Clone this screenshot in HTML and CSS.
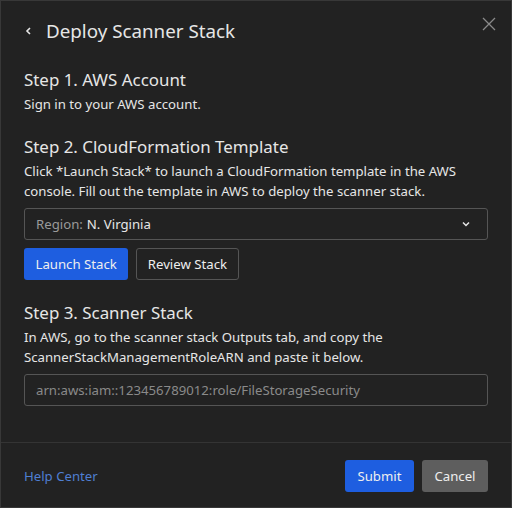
FILE: index.html
```html
<!DOCTYPE html>
<html>
<head>
<meta charset="utf-8">
<link rel="stylesheet" href="styles.css">
</head>
<body>
<div class="dialog">
  <div class="header">
    <svg class="back" width="10" height="10" viewBox="0 0 10 10"><path d="M6 2 L3 5 L6 8" fill="none" stroke="#e6e6e6" stroke-width="1.6"/></svg>
    <h1 class="title">Deploy Scanner Stack</h1>
    <svg class="close" width="14" height="14" viewBox="0 0 14 14"><path d="M1 1 L13 13 M13 1 L1 13" stroke="#8a8a8a" stroke-width="1.3"/></svg>
  </div>
  <div class="body">
    <section class="step">
      <h2>Step 1. AWS Account</h2>
      <p>Sign in to your AWS account.</p>
    </section>
    <section class="step">
      <h2>Step 2. CloudFormation Template</h2>
      <p>Click *Launch Stack* to launch a CloudFormation template in the AWS console. Fill out the template in AWS to deploy the scanner stack.</p>
      <div class="select"><span class="lbl">Region:</span><span class="val">N. Virginia</span>
        <svg class="chev" width="10" height="10" viewBox="0 0 10 10"><path d="M2 3.5 L5 6.5 L8 3.5" fill="none" stroke="#e6e6e6" stroke-width="1.5"/></svg>
      </div>
      <div class="btns">
        <button class="btn primary">Launch Stack</button>
        <button class="btn outline">Review Stack</button>
      </div>
    </section>
    <section class="step">
      <h2>Step 3. Scanner Stack</h2>
      <p>In AWS, go to the scanner stack Outputs tab, and copy the ScannerStackManagementRoleARN and paste it below.</p>
      <div class="input">arn:aws:iam::123456789012:role/FileStorageSecurity</div>
    </section>
  </div>
  <div class="footer">
    <a class="help">Help Center</a>
    <div class="actions">
      <button class="btn primary fb">Submit</button>
      <button class="btn grey fb">Cancel</button>
    </div>
  </div>
</div>
</body>
</html>
```
FILE: styles.css
```css
* { box-sizing: border-box; margin: 0; padding: 0; }
html, body { background: #222222; }
body { font-family: "Noto Sans", sans-serif; color: #e6e6e6; width: 512px; height: 508px; }
.dialog { width: 512px; height: 508px; border: 1px solid #383838; background: #222222; display: flex; flex-direction: column; }
.header { display: flex; align-items: center; padding: 16px 15px 0 23px; }
.back { margin-right: 12px; }
.title { font-weight: 400; font-size: 18.8px; flex: 1; line-height: 28px; }
.close { align-self: flex-start; margin-top: 0; }
.body { padding: 21px 23px 0 23px; flex: 1; }
.step { margin-bottom: 19px; }
.step h2 { font-weight: 400; font-size: 16.9px; line-height: 28px; }
.step p { font-size: 13.2px; line-height: 20px; }
.select { margin-top: 7px; height: 32px; border: 1px solid #555; border-radius: 3px; display: flex; align-items: center; padding: 0 16px 0 11px; font-size: 13.2px; }
.lbl { color: #9a9a9a; margin-right: 4px; }
.val { flex: 1; }
.btns { display: flex; gap: 8px; margin-top: 8px; }
.btn { font-family: inherit; font-size: 13.2px; height: 32px; padding: 0 10.5px; border-radius: 3px; border: 1px solid transparent; color: #eeeeee; }
.fb { padding: 0 11.5px; }
.primary { background: #1e5ee0; }
.outline { background: transparent; border-color: #555; }
.grey { background: #5e5e5e; }
.input { margin-top: 7px; height: 32px; border: 1px solid #555; border-radius: 3px; display: flex; align-items: center; padding: 0 11px; font-size: 13.2px; color: #8a8a8a; }
.footer { border-top: 1px solid #343434; height: 65px; display: flex; align-items: center; padding: 1px 23px 0 23px; }
.help { color: #4f7fd2; font-size: 13.2px; flex: 1; }
.actions { display: flex; gap: 8px; }
```
